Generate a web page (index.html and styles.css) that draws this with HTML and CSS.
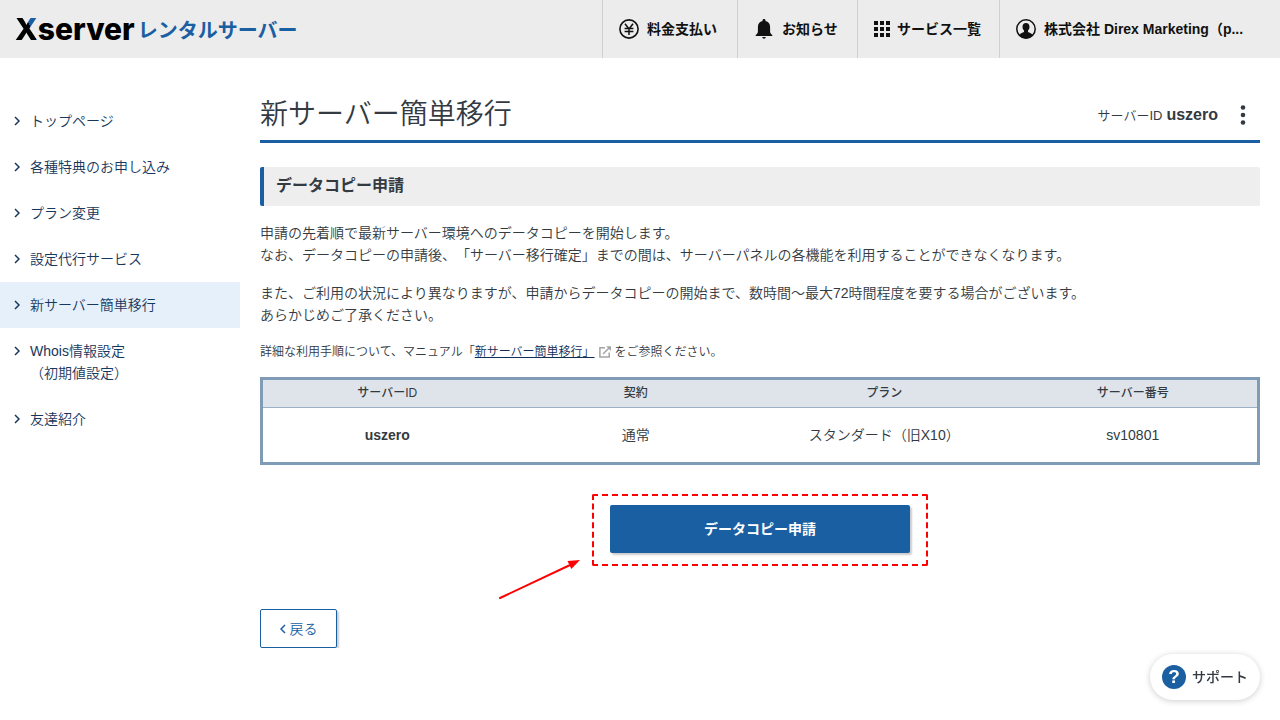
FILE: index.html
```html
<!DOCTYPE html>
<html lang="ja">
<head>
<meta charset="utf-8">
<title>新サーバー簡単移行 | Xserver レンタルサーバー</title>
<link rel="stylesheet" href="styles.css">
</head>
<body>
<header class="header">
  <a class="logo" href="#"><span class="logo-name"><span class="logo-x">X</span>server</span><span class="logo-sub">レンタルサーバー</span></a>
  <nav class="header-nav">
    <a class="header-link pay" href="#">
      <svg class="icon" viewBox="0 0 20 20" fill="none" stroke="currentColor" stroke-width="1.6"><circle cx="10" cy="10" r="9.1"/><path d="M6 4.8 10 10l4-5.2M10 10v6M5.6 9.6h8.8M5.6 12.4h8.8" stroke-width="1.5"/></svg>
      <span>料金支払い</span>
    </a>
    <a class="header-link bell" href="#">
      <svg class="icon" viewBox="0 0 20 20" fill="currentColor"><path d="M10 0c.9 0 1.500.6 1.500 1.400v.7c2.900.6 4.600 2.800 4.600 6v4.500c0 1.500.8 2.400 2.200 3.400v1H1.700v-1c1.400-1 2.200-1.900 2.200-3.400V8.100c0-3.200 1.700-5.400 4.600-6v-.7C8.500.6 9.100 0 10 0zM8.300 18h3.400c0 1-.8 1.700-1.700 1.700S8.300 19 8.300 18z"/></svg>
      <span>お知らせ</span>
    </a>
    <a class="header-link grid" href="#">
      <svg class="icon-grid" viewBox="0 0 16 16" fill="currentColor"><path d="M0 0h4v4H0zM6 0h4v4H6zM12 0h4v4h-4zM0 6h4v4H0zM6 6h4v4H6zM12 6h4v4h-4zM0 12h4v4H0zM6 12h4v4H6zM12 12h4v4h-4z"/></svg>
      <span>サービス一覧</span>
    </a>
    <a class="header-link user" href="#">
      <svg class="icon" viewBox="0 0 20 20"><circle cx="10" cy="10" r="9.2" fill="none" stroke="currentColor" stroke-width="1.500"/><path fill="currentColor" d="M10 3.900c2.200 0 3.500 1.600 3.500 3.900 0 1.600-.6 3-1.500 3.800v1.200c0 .7 3.400 1.200 4.800 3.200C15.300 18.300 12.800 19.600 10 19.600s-5.300-1.300-6.800-3.600c1.400-2 4.800-2.500 4.800-3.200v-1.200c-.9-.8-1.500-2.200-1.500-3.800 0-2.300 1.300-3.900 3.500-3.900z"/></svg>
      <span>株式会社 Direx Marketing（p...</span>
    </a>
  </nav>
</header>
<div class="page">
  <nav class="sidebar">
    <a class="side-link" href="#"><svg class="chevron" viewBox="0 0 6 10"><path d="M1 1l4 4-4 4"/></svg><span>トップページ</span></a>
    <a class="side-link" href="#"><svg class="chevron" viewBox="0 0 6 10"><path d="M1 1l4 4-4 4"/></svg><span>各種特典のお申し込み</span></a>
    <a class="side-link" href="#"><svg class="chevron" viewBox="0 0 6 10"><path d="M1 1l4 4-4 4"/></svg><span>プラン変更</span></a>
    <a class="side-link" href="#"><svg class="chevron" viewBox="0 0 6 10"><path d="M1 1l4 4-4 4"/></svg><span>設定代行サービス</span></a>
    <a class="side-link current" href="#" aria-current="page"><svg class="chevron" viewBox="0 0 6 10"><path d="M1 1l4 4-4 4"/></svg><span>新サーバー簡単移行</span></a>
    <a class="side-link" href="#"><svg class="chevron" viewBox="0 0 6 10"><path d="M1 1l4 4-4 4"/></svg><span>Whois情報設定<br>（初期値設定）</span></a>
    <a class="side-link" href="#"><svg class="chevron" viewBox="0 0 6 10"><path d="M1 1l4 4-4 4"/></svg><span>友達紹介</span></a>
  </nav>
  <main class="main">
    <div class="title-bar">
      <h1 class="title">新サーバー簡単移行</h1>
      <div class="server-id"><span>サーバーID</span><strong>uszero</strong></div>
      <button class="more" type="button" aria-label="メニュー"><svg class="dots" viewBox="0 0 6 20" fill="currentColor"><circle cx="3" cy="2.500" r="2.300"/><circle cx="3" cy="10" r="2.300"/><circle cx="3" cy="17.500" r="2.300"/></svg></button>
    </div>
    <h2 class="section-title">データコピー申請</h2>
    <p class="text">申請の先着順で最新サーバー環境へのデータコピーを開始します。<br>なお、データコピーの申請後、「サーバー移行確定」までの間は、サーバーパネルの各機能を利用することができなくなります。</p>
    <p class="text">また、ご利用の状況により異なりますが、申請からデータコピーの開始まで、数時間～最大72時間程度を要する場合がございます。<br>あらかじめご了承ください。</p>
    <p class="note">詳細な利用手順について、マニュアル「<a class="manual" href="#">新サーバー簡単移行」</a><svg class="external" viewBox="0 0 12 12" fill="none" stroke="#a5a5a5" stroke-width="1.500"><path d="M6 1.800H.9v9.300h9.300V6.500M4 8l6-6"/><path d="M7.200.2H12V5z" fill="#a5a5a5" stroke="none"/></svg>をご参照ください。</p>
    <table class="servers">
      <thead><tr><th>サーバーID</th><th>契約</th><th>プラン</th><th>サーバー番号</th></tr></thead>
      <tbody><tr><td><strong>uszero</strong></td><td>通常</td><td>スタンダード（旧X10）</td><td>sv10801</td></tr></tbody>
    </table>
    <div class="submit-row">
      <div class="submit-wrap">
        <button class="submit" type="button">データコピー申請</button>
        <svg class="arrow" viewBox="0 0 82 40"><path d="M1 39 70 6.500" stroke="#f00" stroke-width="2" stroke-linecap="round"/><path d="M81 1 72.300 10 68.500 2z" fill="#f00"/></svg>
      </div>
    </div>
    <button class="back" type="button"><svg class="chevron" viewBox="0 0 6 10"><path d="M5 1 1 5l4 4"/></svg>戻る</button>
  </main>
</div>
<button class="support" type="button"><span class="support-mark">?</span>サポート</button>
</body>
</html>
```

FILE: styles.css
```css
* { box-sizing: border-box; }
body {
  margin: 0;
  background: #fff;
  color: #333a42;
  font-family: "Liberation Sans", "Noto Sans CJK JP", sans-serif;
  font-size: 14px;
  font-weight: 350;
  line-height: 22px;
  text-spacing-trim: space-all;
}
a { color: inherit; text-decoration: none; }
button { font: inherit; cursor: pointer; }
strong { font-weight: 700; }

.header {
  display: flex;
  justify-content: space-between;
  height: 58px;
  background: #ececec;
  color: #111;
}
.logo { display: flex; align-items: center; gap: 3px; padding-left: 15px; }
.logo-name { color: #000; font: 800 30px/40px Inter, sans-serif; }
.logo-x {
  background: linear-gradient(65deg, #000 62%, #1b5fa3 62%);
  background-clip: text;
  -webkit-background-clip: text;
  color: transparent;
}
.logo-sub { padding-top: 2px; color: #1b5fa3; font: 700 20px/40px "Noto Sans CJK JP", sans-serif; }
.header-nav { display: flex; }
.header-link {
  display: flex;
  align-items: center;
  gap: 8px;
  padding: 0 16px;
  border-left: 1px solid #d0d0d0;
  font-weight: 700;
  white-space: nowrap;
}
.pay { width: 135px; }
.bell { width: 120px; }
.grid { width: 142px; gap: 7px; }
.user { width: 281px; }
.icon { flex: none; width: 20px; height: 20px; }
.icon-grid { flex: none; width: 16px; height: 16px; }

.page { display: flex; gap: 20px; padding: 40px 20px 0 0; }
.sidebar { flex: none; width: 240px; color: #17375c; }
.side-link { display: flex; align-items: flex-start; gap: 10px; padding: 12px 14px; }
.current { background: #e5f0fa; }
.chevron {
  flex: none;
  width: 6px;
  height: 10px;
  margin-top: 6px;
  fill: none;
  stroke: currentColor;
  stroke-width: 1.5;
}

.main { flex: 1; min-width: 0; }
.title-bar {
  display: flex;
  align-items: center;
  height: 45px;
  padding-bottom: 8px;
  border-bottom: 3px solid #1b5fa3;
}
.title { flex: 1; margin: 0; font-size: 28px; font-weight: 350; line-height: 32px; }
.server-id { display: flex; align-items: baseline; gap: 4px; font-size: 13px; }
.server-id strong { font-size: 16px; }
.more { display: flex; margin-left: 8px; padding: 0 14px; border: 0; background: none; color: inherit; }
.dots { width: 6px; height: 20px; }
.section-title {
  margin: 24px 0 16px;
  padding: 8px 12px 9px;
  border-left: 4px solid #1b5fa3;
  border-radius: 2px;
  background: #eee;
  font-size: 16px;
  font-weight: 700;
}
.text { margin: 0 0 16px; }
.note { margin: 0 0 15px; font-size: 12px; line-height: 20px; }
.manual { color: #0f2f57; text-decoration: underline; }
.external { width: 12px; height: 12px; margin: 0 4px; vertical-align: -2px; }

.servers {
  width: 100%;
  border: 3px solid #7f9bb6;
  border-collapse: separate;
  border-spacing: 0;
  table-layout: fixed;
  text-align: center;
}
.servers th {
  padding: 2px 0 3px;
  border-bottom: 1px solid #9bb0c5;
  background: #dfe4eb;
  font-size: 12px;
  font-weight: 500;
}
.servers td { padding: 16px 0; }
.submit-row { display: flex; justify-content: center; margin-top: 29px; }
.submit-wrap { position: relative; padding: 9px 16px 11px; border: 2px dashed #f00; border-radius: 2px; }
.submit {
  display: block;
  width: 300px;
  height: 48px;
  border: 0;
  border-radius: 2px;
  background: #1b5fa3;
  box-shadow: 2px 2px 2px #ccc;
  color: #fff;
  font-weight: 700;
}
.arrow { position: absolute; left: -95px; bottom: -35px; width: 82px; height: 40px; }
.back {
  display: flex;
  align-items: center;
  justify-content: center;
  gap: 4px;
  width: 77px;
  height: 39px;
  margin-top: 43px;
  border: 1px solid #1b5fa3;
  border-radius: 2px;
  background: #fff;
  box-shadow: 2px 2px 2px #ccc;
  color: #1b5fa3;
}
.back .chevron { margin-top: 0; }
.support {
  position: fixed;
  right: 20px;
  bottom: 20px;
  display: flex;
  align-items: center;
  gap: 6px;
  height: 46px;
  padding: 0 12px;
  border: 0;
  border-radius: 23px;
  background: #fff;
  box-shadow: 0 1px 6px rgba(0, 0, 0, 0.2);
  color: #333a42;
  font-weight: 500;
  white-space: nowrap;
}
.support-mark {
  width: 24px;
  height: 24px;
  border-radius: 50%;
  background: #1b5fa3;
  color: #fff;
  font: 700 19px/24px "Liberation Sans", sans-serif;
}
```
